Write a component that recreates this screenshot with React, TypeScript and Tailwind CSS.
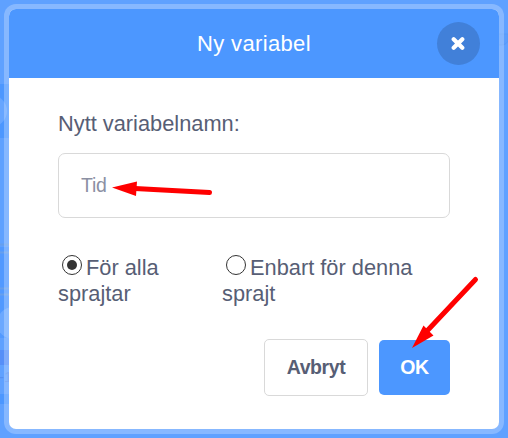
function CloseIcon() {
  return (
    <svg className="-translate-x-px -translate-y-[0.5px]" width="14" height="14" viewBox="0 0 14 14" fill="none" stroke="white" strokeWidth="4.2" strokeLinecap="round">
      <path d="M2.700 2.700 11.300 11.300M11.300 2.700 2.700 11.300" />
    </svg>
  );
}

function Radio({ checked = false }: { checked?: boolean }) {
  return (
    <span
      role="radio"
      aria-checked={checked}
      className="mr-1 ml-1 inline-flex size-5 items-center justify-center rounded-full border border-[#333] bg-white align-top"
    >
      {checked && <span className="size-2.5 rounded-full bg-[#333]" />}
    </span>
  );
}

function Backdrop() {
  return (
    <svg className="absolute inset-0" width="508" height="438" aria-hidden="true">
      <rect width="9" height="54" y="84" fill="#4c97ff" />
      <circle cx="-9" cy="111" r="16" fill="#66a5ff" />
      <rect width="9" height="91" y="247" fill="#5199ff" />
      <path d="M0 244.500H9M0 252.500H9M0 288.500H9M0 294.500H9" stroke="#669fed" strokeWidth="2" />
      <circle cx="13" cy="323" r="16" fill="#6ba8ff" />
      <rect width="9" height="15" y="350" fill="#568ff8" />
      <text x="-1" y="382" fontSize="15" fill="#568ff0">-1</text>
      <rect width="9" height="10" y="394" fill="#4c97ff" />
      <path d="M499 34h9v7c-2 4-5 4-9 4" fill="#5c9efc" stroke="#589af7" />
    </svg>
  );
}

export default function App() {
  return (
    <div className="relative h-[438px] w-[508px] overflow-hidden bg-[#5fa1ff] p-1 font-['Liberation_Sans',Arial,sans-serif] text-[21.8px] text-[#575e75]">
      <Backdrop />
      <div className="relative h-[430px] w-[500px] rounded-xl bg-white/25 p-[5px]">
        <div className="h-[420px] overflow-hidden rounded-[7px] bg-white">
          <header className="grid h-[69px] grid-cols-[1fr_auto_1fr] items-center bg-[#4c97ff] pr-[19px] text-white">
            <span />
            <h1 className="pl-[19px] text-[22px] tracking-[0.35px]">Ny variabel</h1>
            <button className="flex size-[43px] items-center justify-center justify-self-end rounded-full bg-[#4180d9]" aria-label="Stäng">
              <CloseIcon />
            </button>
          </header>
          <main className="px-[49px] pt-8">
            <div className="leading-[27px]">Nytt variabelnamn:</div>
            <div className="mt-4 flex h-[65px] items-center rounded-[7px] border border-[#d9d9d9] pl-[22px] text-[19.500px] tracking-[-0.3px] text-[#8b90a3]">
              Tid
            </div>
            <div className="mt-[36px] flex h-[53px] pt-px leading-[26px]">
              <label className="w-[164px] pr-8"><Radio checked />För alla sprajtar</label>
              <label className="w-[210px]"><Radio />Enbart för denna sprajt</label>
            </div>
            <div className="mt-8 flex items-center justify-end gap-[11px] text-[19.500px] font-bold tracking-[-0.4px]">
              <button className="h-[57px] w-[104px] rounded-[5px] border border-[#d9d9d9]">Avbryt</button>
              <button className="h-[55px] w-[71px] rounded-[5px] bg-[#4c97ff] text-white">OK</button>
            </div>
          </main>
        </div>
      </div>
      <svg className="absolute inset-0" width="508" height="438" fill="red" stroke="red" aria-hidden="true">
        <path d="M135 188.500 209.500 192.500M427 331 475.500 279.500" strokeWidth="5" strokeLinecap="round" />
        <path d="M112 187.500 137 181.500 136 196ZM412 348 423.500 325.500 433.500 335.500Z" stroke="none" />
      </svg>
    </div>
  );
}
